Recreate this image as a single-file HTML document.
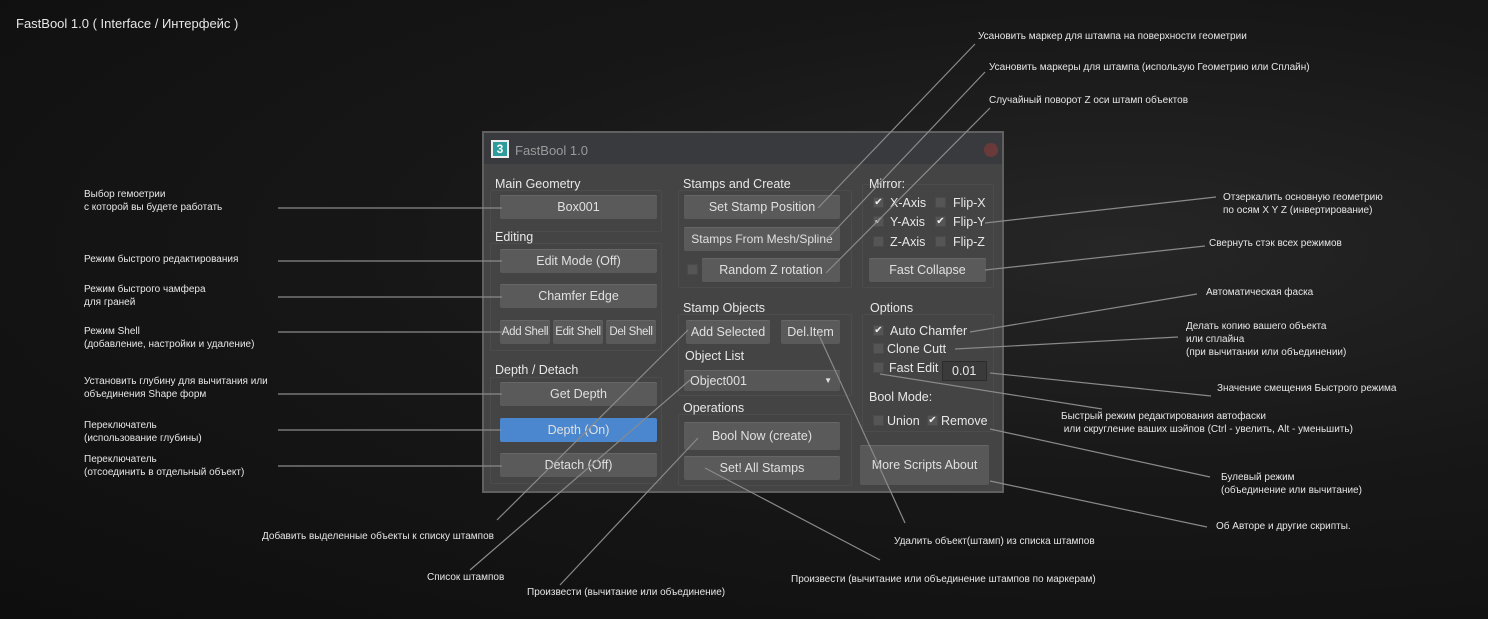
<!DOCTYPE html>
<html><head><meta charset="utf-8"><style>
*{margin:0;padding:0;box-sizing:border-box}
body{width:1488px;height:619px;overflow:hidden;background:#121212;font-family:"Liberation Sans",sans-serif;position:relative}
.bg{position:absolute;inset:0;background:radial-gradient(ellipse at 75% 40%,#262626 0%,#171717 45%,#0e0e0e 100%)}
.t{position:absolute;color:#e6e6e6;font-size:10px;line-height:13px;white-space:nowrap}
.panel{position:absolute;left:482px;top:131px;width:522px;height:362px;background:#444;border:2px solid #606060}
.title{position:absolute;left:0;top:0;width:100%;height:31px;background:#383a3e}
.a{position:absolute;color:#e8e8e8;font-size:12.5px;white-space:nowrap}
.b{position:absolute;background:#5a5a5a;color:#e0e0e0;font-size:12.5px;text-align:center;border-radius:2px;display:flex;align-items:center;justify-content:center;white-space:nowrap;box-shadow:inset 0 1px 0 #666}
.cb{position:absolute;width:11px;height:11px;background:#555;border:1px solid #4a4a4a;color:#eee;font-size:10px;line-height:10px;text-align:center}
.g{position:absolute;border:1px solid #4c4c4c;border-radius:2px}
svg{position:absolute;left:0;top:0}
</style></head><body>
<div class="bg"></div>
<div class="t" style="left:16px;top:16px;font-size:13px;line-height:16px">FastBool 1.0 ( Interface / Интерфейс )</div>

<div class="panel">
 <div class="title"></div>
 <div style="position:absolute;left:7px;top:7px;width:18px;height:18px;background:#2e9c9c;border:2px solid #eee;color:#fff;font-size:12px;font-weight:bold;text-align:center;line-height:14px">3</div>
 <div class="a" style="left:31px;top:10px;color:#9a9a9a;font-size:13px">FastBool 1.0</div>
 <div style="position:absolute;left:500px;top:10px;width:14px;height:14px;border-radius:50%;background:#6a3a3a"></div>
</div>
<div style="position:absolute;left:0;top:0">
 <div class="g" style="left:490px;top:190px;width:172px;height:42px"></div>
 <div class="g" style="left:490px;top:243px;width:172px;height:108px"></div>
 <div class="g" style="left:490px;top:377px;width:172px;height:107px"></div>
 <div class="g" style="left:678px;top:190px;width:174px;height:98px"></div>
 <div class="g" style="left:678px;top:314px;width:174px;height:82px"></div>
 <div class="g" style="left:678px;top:414px;width:174px;height:72px"></div>
 <div class="g" style="left:862px;top:184px;width:132px;height:104px"></div>
 <div class="g" style="left:862px;top:314px;width:132px;height:118px"></div>

 <div class="a" style="left:495px;top:177px">Main Geometry</div>
 <div class="b" style="left:500px;top:195px;width:157px;height:24px">Box001</div>
 <div class="a" style="left:495px;top:230px">Editing</div>
 <div class="b" style="left:500px;top:249px;width:157px;height:24px">Edit Mode (Off)</div>
 <div class="b" style="left:500px;top:284px;width:157px;height:24px">Chamfer Edge</div>
 <div class="b" style="left:500px;top:320px;width:50px;height:24px;font-size:11.5px;letter-spacing:-0.3px">Add Shell</div>
 <div class="b" style="left:553px;top:320px;width:50px;height:24px;font-size:11.5px;letter-spacing:-0.3px">Edit Shell</div>
 <div class="b" style="left:606px;top:320px;width:50px;height:24px;font-size:11.5px;letter-spacing:-0.3px">Del Shell</div>
 <div class="a" style="left:495px;top:363px">Depth / Detach</div>
 <div class="b" style="left:500px;top:382px;width:157px;height:24px">Get Depth</div>
 <div class="b" style="left:500px;top:418px;width:157px;height:24px;background:#4b87cf;box-shadow:none">Depth (On)</div>
 <div class="b" style="left:500px;top:453px;width:157px;height:24px">Detach (Off)</div>

 <div class="a" style="left:683px;top:177px">Stamps and Create</div>
 <div class="b" style="left:684px;top:195px;width:156px;height:24px">Set Stamp Position</div>
 <div class="b" style="left:684px;top:227px;width:156px;height:24px;font-size:12px">Stamps From Mesh/Spline</div>
 <div class="cb" style="left:687px;top:264px"></div>
 <div class="b" style="left:702px;top:258px;width:138px;height:24px">Random Z rotation</div>
 <div class="a" style="left:683px;top:301px">Stamp Objects</div>
 <div class="b" style="left:686px;top:320px;width:84px;height:24px">Add Selected</div>
 <div class="b" style="left:781px;top:320px;width:59px;height:24px">Del.Item</div>
 <div class="a" style="left:685px;top:349px">Object List</div>
 <div class="b" style="left:684px;top:370px;width:156px;height:21px;justify-content:flex-start;padding-left:6px;background:#575757">Object001<span style="position:absolute;right:8px;font-size:8px">▼</span></div>
 <div class="a" style="left:683px;top:401px">Operations</div>
 <div class="b" style="left:684px;top:422px;width:156px;height:28px">Bool Now (create)</div>
 <div class="b" style="left:684px;top:456px;width:156px;height:24px">Set! All Stamps</div>

 <div class="a" style="left:869px;top:177px">Mirror:</div>
 <div class="cb" style="left:873px;top:197px">✔</div><div class="a" style="left:890px;top:196px">X-Axis</div>
 <div class="cb" style="left:935px;top:197px"></div><div class="a" style="left:953px;top:196px">Flip-X</div>
 <div class="cb" style="left:873px;top:216px">✔</div><div class="a" style="left:890px;top:215px">Y-Axis</div>
 <div class="cb" style="left:935px;top:216px">✔</div><div class="a" style="left:953px;top:215px">Flip-Y</div>
 <div class="cb" style="left:873px;top:236px"></div><div class="a" style="left:890px;top:235px">Z-Axis</div>
 <div class="cb" style="left:935px;top:236px"></div><div class="a" style="left:953px;top:235px">Flip-Z</div>
 <div class="b" style="left:869px;top:258px;width:117px;height:24px">Fast Collapse</div>
 <div class="a" style="left:870px;top:301px">Options</div>
 <div class="cb" style="left:873px;top:325px">✔</div><div class="a" style="left:890px;top:324px">Auto Chamfer</div>
 <div class="cb" style="left:873px;top:343px"></div><div class="a" style="left:887px;top:342px">Clone Cutt</div>
 <div class="cb" style="left:873px;top:362px"></div><div class="a" style="left:889px;top:361px">Fast Edit</div>
 <div style="position:absolute;left:942px;top:361px;width:45px;height:20px;background:#3a3a3a;border:1px solid #2c2c2c;color:#e8e8e8;font-size:12.5px;padding:2px 0 0 9px">0.01</div>
 <div class="a" style="left:869px;top:390px">Bool Mode:</div>
 <div class="cb" style="left:873px;top:415px"></div><div class="a" style="left:887px;top:414px">Union</div>
 <div class="cb" style="left:927px;top:415px">✔</div><div class="a" style="left:941px;top:414px">Remove</div>
 <div class="b" style="left:860px;top:445px;width:129px;height:40px;background:#585858">More Scripts About</div>
</div>

<svg width="1488" height="619" stroke="#8a8a8a" stroke-width="1.2" fill="none">
 <line x1="278" y1="208" x2="502" y2="208"/>
 <line x1="278" y1="261" x2="502" y2="261"/>
 <line x1="278" y1="297" x2="502" y2="297"/>
 <line x1="278" y1="332" x2="502" y2="332"/>
 <line x1="278" y1="394" x2="502" y2="394"/>
 <line x1="278" y1="430" x2="502" y2="430"/>
 <line x1="278" y1="466" x2="502" y2="466"/>
 <line x1="975" y1="44" x2="818" y2="208"/>
 <line x1="985" y1="72" x2="826" y2="240"/>
 <line x1="990" y1="108" x2="826" y2="273"/>
 <line x1="1216" y1="197" x2="985" y2="223"/>
 <line x1="1205" y1="246" x2="985" y2="270"/>
 <line x1="1197" y1="294" x2="970" y2="332"/>
 <line x1="1178" y1="337" x2="955" y2="349"/>
 <line x1="1211" y1="396" x2="990" y2="373"/>
 <line x1="1102" y1="409" x2="880" y2="374"/>
 <line x1="1210" y1="477" x2="990" y2="429"/>
 <line x1="1207" y1="527" x2="990" y2="481"/>
 <line x1="497" y1="520" x2="688" y2="330"/>
 <line x1="470" y1="570" x2="690" y2="380"/>
 <line x1="560" y1="585" x2="698" y2="438"/>
 <line x1="880" y1="560" x2="705" y2="468"/>
 <line x1="905" y1="523" x2="818" y2="333"/>
</svg>

<div class="t" style="left:84px;top:188px">Выбор гемоетрии<br>с которой вы будете работать</div>
<div class="t" style="left:84px;top:253px">Режим быстрого редактирования</div>
<div class="t" style="left:84px;top:283px">Режим быстрого чамфера<br>для граней</div>
<div class="t" style="left:84px;top:325px">Режим Shell<br>(добавление, настройки и удаление)</div>
<div class="t" style="left:84px;top:375px">Установить глубину для вычитания или<br>объединения Shape форм</div>
<div class="t" style="left:84px;top:419px">Переключатель<br>(использование глубины)</div>
<div class="t" style="left:84px;top:453px">Переключатель<br>(отсоединить в отдельный объект)</div>
<div class="t" style="left:978px;top:30px">Усановить маркер для штампа на поверхности геометрии</div>
<div class="t" style="left:989px;top:61px">Усановить маркеры для штампа (использую Геометрию или Сплайн)</div>
<div class="t" style="left:989px;top:94px">Случайный поворот Z оси штамп объектов</div>
<div class="t" style="left:1223px;top:191px">Отзеркалить основную геометрию<br>по осям X Y Z (инвертирование)</div>
<div class="t" style="left:1209px;top:237px">Свернуть стэк всех режимов</div>
<div class="t" style="left:1206px;top:286px">Автоматическая фаска</div>
<div class="t" style="left:1186px;top:320px">Делать копию вашего объекта<br>или сплайна<br>(при вычитании или объединении)</div>
<div class="t" style="left:1217px;top:382px">Значение смещения Быстрого режима</div>
<div class="t" style="left:1061px;top:410px">Быстрый режим редактирования автофаски<br>&nbsp;или скругление ваших шэйпов (Ctrl - увелить, Alt - уменьшить)</div>
<div class="t" style="left:1221px;top:471px">Булевый режим<br>(объединение или вычитание)</div>
<div class="t" style="left:1216px;top:520px">Об Авторе и другие скрипты.</div>
<div class="t" style="left:262px;top:530px">Добавить выделенные объекты к списку штампов</div>
<div class="t" style="left:894px;top:535px">Удалить объект(штамп) из списка штампов</div>
<div class="t" style="left:427px;top:571px">Список штампов</div>
<div class="t" style="left:791px;top:573px">Произвести (вычитание или объединение штампов по маркерам)</div>
<div class="t" style="left:527px;top:586px">Произвести (вычитание или объединение)</div>
</body></html>
